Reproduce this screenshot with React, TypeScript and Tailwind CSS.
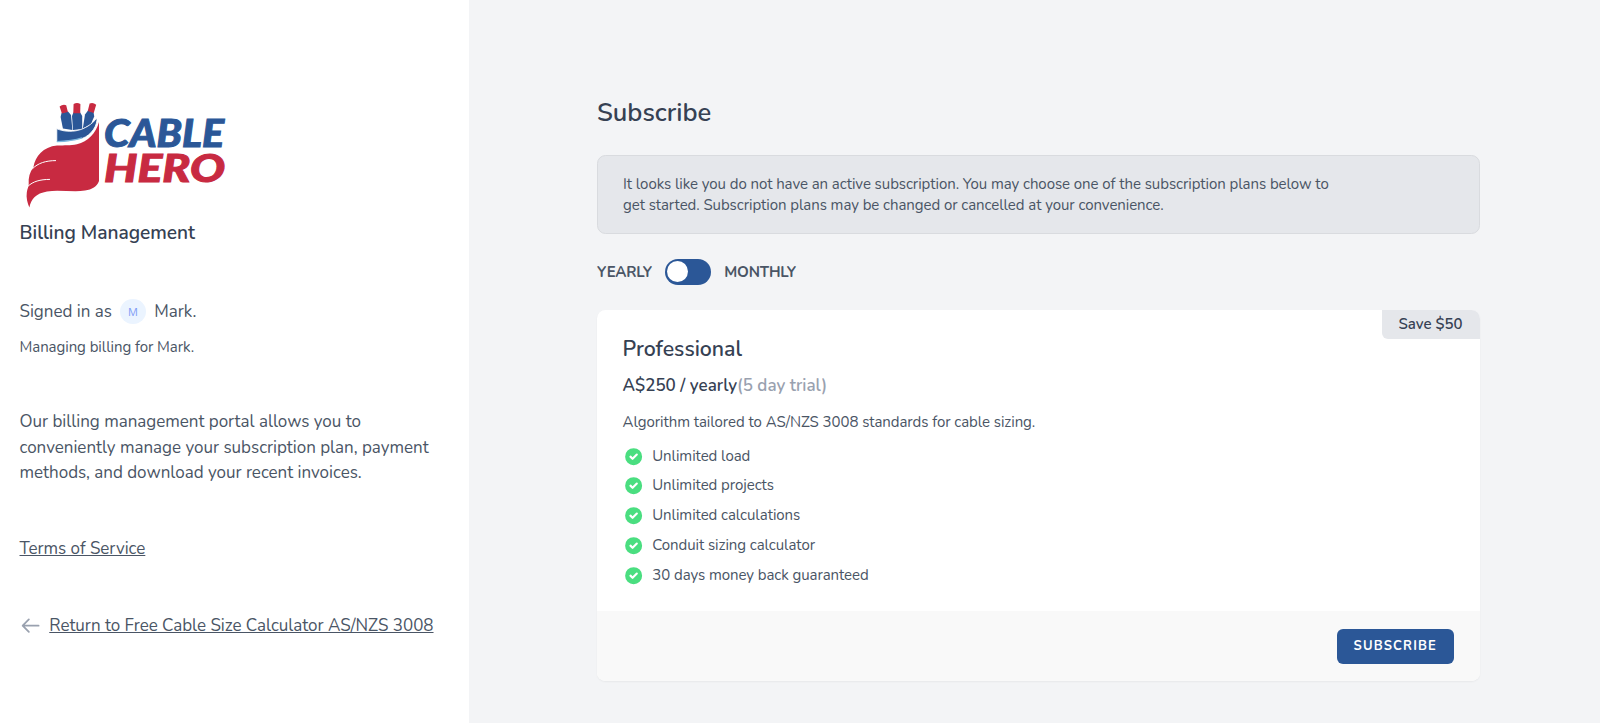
import { useState } from "react";

const features = [
  "Unlimited load",
  "Unlimited projects",
  "Unlimited calculations",
  "Conduit sizing calculator",
  "30 days money back guaranteed",
];

function Logo() {
  return (
    <svg className="block h-[112px] w-[210px]" viewBox="0 0 210 112">
      {/* Cables */}
      <g fill="#2b5797">
        <path d="M41.6 14.8 48 13.4 51 17 52.4 32 42.9 30.5 40.6 19Z" />
        <path d="M53.4 14.5 60.2 14.5 62.2 18 62.2 31 53 32 52 18Z" />
        <path d="M68 12.6 73.6 14.3 74.2 18.5 71 26 62.8 30.4 65 16.5Z" />
      </g>
      <g fill="#c82a41">
        <path d="M39.6 8.6Q42.6 6 46.2 7.2L47.9 14 41.9 15.5Z" />
        <path d="M53.6 6Q57 4.2 60.4 6L60.2 15.2H53.3Z" />
        <path d="M69.6 5.6Q73 4 76.2 6.8L73.7 15 67.8 13Z" />
      </g>
      {/* Collar */}
      <path
        fill="#2b5797"
        stroke="#fff"
        strokeWidth="0.8"
        d="M36.8 30.8C50 36 66 33.5 77 20C77.4 27 72 37 62 40.5C54 43.2 46 43.5 36.8 43.6Z"
      />
      <path
        fill="none"
        stroke="#7db9df"
        strokeWidth="1.4"
        d="M36.8 43.6C48 43.2 56 41.8 62 39.8"
      />
      {/* Cape */}
      <path
        fill="#c82a41"
        d="M79 24V83C77 88.5 72 91.5 65 92.6C53 94.4 39 91.4 27 93.4C16 95.3 11 101 9.4 109.6C7.4 105 6 99.5 6.8 94.5C7.2 91 8.7 88.5 8.7 86C8.2 80 9.8 74 13.4 69.3C15.5 58 23 49 37 47.6C45 47 50 47.8 57 46.2C68 43.5 76 35 79 24Z"
      />
      <g fill="none" stroke="#fff" strokeLinecap="round">
        <path d="M12.6 70.6C18 65 26 62.6 35.6 62.6" strokeWidth="1" />
        <path d="M8.2 88C13 83.5 20 81.4 29.6 81.4" strokeWidth="1" />
      </g>
      <g
        className="font-[Lato,sans-serif] italic font-black"
        fontSize="38.8"
        strokeWidth="1"
      >
        <text
          x="84"
          y="49"
          fill="#2b5797"
          stroke="#2b5797"
          textLength="120"
          lengthAdjust="spacingAndGlyphs"
        >
          CABLE
        </text>
        <text
          x="84"
          y="83.6"
          fill="#c82a41"
          stroke="#c82a41"
          textLength="121"
          lengthAdjust="spacingAndGlyphs"
        >
          HERO
        </text>
      </g>
    </svg>
  );
}

function ArrowLeft() {
  return (
    <svg
      className="size-[21.25px] text-gray-400"
      viewBox="0 0 24 24"
      fill="none"
      stroke="currentColor"
      strokeWidth="2"
      strokeLinecap="round"
      strokeLinejoin="round"
    >
      <path d="M10 19l-7-7m0 0l7-7m-7 7h18" />
    </svg>
  );
}

function CheckCircle() {
  return (
    <svg className="size-[21.25px]" viewBox="0 0 20 20" fill="#4ade80">
      <path
        fillRule="evenodd"
        clipRule="evenodd"
        d="M10 18a8 8 0 100-16 8 8 0 000 16zm3.707-9.293a1 1 0 00-1.414-1.414L9 10.586 7.707 9.293a1 1 0 00-1.414 1.414l2 2a1 1 0 001.414 0l4-4z"
      />
    </svg>
  );
}

function Sidebar() {
  return (
    <aside className="w-[469px] shrink-0 bg-white px-[19.5px] pt-[98px] text-[17px] leading-[25.5px] tracking-[-0.02px] text-gray-600">
      <Logo />
      <h1 className="mt-[9px] text-[19.125px] font-semibold leading-[29.75px] text-gray-700">
        Billing Management
      </h1>

      <div className="mt-[50px] flex items-center gap-[8.5px]">
        <span>Signed in as</span>
        <span className="flex size-[25.5px] items-center justify-center rounded-full bg-[#ebf4ff] font-['Open_Sans',sans-serif] text-[11px] text-[#7f9cf5]">
          M
        </span>
        <span>Mark.</span>
      </div>
      <p className="mt-[13px] text-[15px] leading-[21.25px] tracking-[-0.06px]">
        Managing billing for Mark.
      </p>

      <p className="mt-[50.5px]">
        Our billing management portal allows you to conveniently manage your
        subscription plan, payment methods, and download your recent invoices.
      </p>

      <div className="mt-[50.5px]">
        <a href="#" className="underline">
          Terms of Service
        </a>
      </div>

      <a href="#" className="mt-[51px] flex items-center gap-[8.5px]">
        <ArrowLeft />
        <span className="underline">
          Return to Free Cable Size Calculator AS/NZS 3008
        </span>
      </a>
    </aside>
  );
}

export default function App() {
  const [monthly, setMonthly] = useState(false);

  return (
    <div className="flex h-[723px] overflow-hidden bg-gray-100 font-[Nunito,Lato,sans-serif]">
      <Sidebar />

      <main className="flex-1 pl-32 pr-[120.5px] pt-24">
        <h2 className="text-[25.5px] font-semibold leading-[34px] text-gray-700">
          Subscribe
        </h2>

        {/* Notice */}
        <div className="mt-[25px] rounded-[8.5px] border border-[#d9dbdf] bg-gray-200 px-[25px] pb-4 pt-[18px]">
          <p className="max-w-[714px] text-[15px] leading-[21.25px] tracking-[-0.06px] text-gray-600">
            It looks like you do not have an active subscription. You may choose
            one of the subscription plans below to get started. Subscription
            plans may be changed or cancelled at your convenience.
          </p>
        </div>

        {/* Billing interval */}
        <div className="mt-[25.5px] flex items-center gap-[12.75px] text-[15px] font-bold tracking-[-0.16px] text-gray-600">
          <span>YEARLY</span>
          <button
            type="button"
            role="switch"
            aria-checked={monthly}
            onClick={() => setMonthly(!monthly)}
            className={`flex h-[25.5px] w-[46.75px] items-center rounded-full bg-[#2b5797] px-[2px] ${
              monthly ? "justify-end" : "justify-start"
            }`}
          >
            <span className="size-[21.25px] rounded-full bg-white" />
          </button>
          <span>MONTHLY</span>
        </div>

        {/* Plan */}
        <section className="relative mt-[25px] overflow-hidden rounded-[8.5px] bg-white shadow-xs">
          <span className="absolute right-0 top-0 rounded-bl-md bg-gray-200 px-[17px] pb-[4px] pt-[4.5px] text-[15px] font-semibold leading-[21.25px] text-gray-700">
            Save $50
          </span>

          <div className="px-[25.5px] pb-[25px] pt-[25.5px] text-[15px] leading-[21.25px] text-gray-600">
            <h3 className="text-[21.25px] font-semibold leading-[29.75px] text-gray-700">
              Professional
            </h3>
            <p className="mt-[8.5px] text-[17px] font-semibold leading-[25.5px] text-gray-700">
              A$250 / yearly<span className="text-gray-400">(5 day trial)</span>
            </p>
            <p className="mt-[12.75px] tracking-[-0.06px]">
              Algorithm tailored to AS/NZS 3008 standards for cable sizing.
            </p>
            <ul className="mt-[12.75px] flex flex-col gap-[8.5px] tracking-[-0.06px]">
              {features.map((feature) => (
                <li key={feature} className="flex items-center gap-[8.5px]">
                  <CheckCircle />
                  <span>{feature}</span>
                </li>
              ))}
            </ul>
          </div>

          <div className="flex justify-end bg-[#f9f9f9] px-[25.5px] pb-[17px] pt-[18px]">
            <button
              type="button"
              className="h-[35.5px] rounded-md bg-[#2b5797] px-[17px] text-[13px] font-bold uppercase tracking-[1.15px] text-white"
            >
              Subscribe
            </button>
          </div>
        </section>
      </main>
    </div>
  );
}
